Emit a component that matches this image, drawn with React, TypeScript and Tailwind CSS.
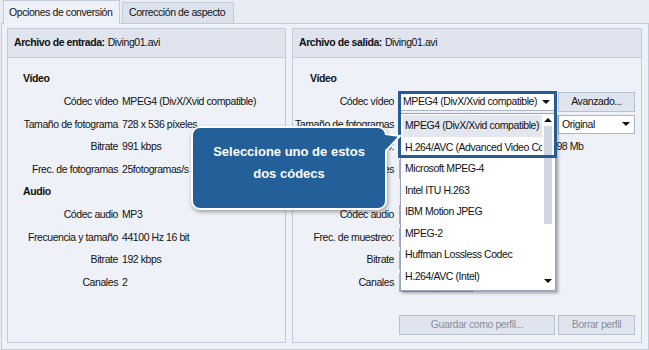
import React from "react";

const leftRows: [string, string, boolean?][] = [
  ["Vídeo", "", true],
  ["Códec vídeo", "MPEG4 (DivX/Xvid compatible)"],
  ["Tamaño de fotograma", "728 x 536 píxeles"],
  ["Bitrate", "991 kbps"],
  ["Frec. de fotogramas", "25fotogramas/s"],
  ["Audio", "", true],
  ["Códec audio", "MP3"],
  ["Frecuencia y tamaño", "44100 Hz 16 bit"],
  ["Bitrate", "192 kbps"],
  ["Canales", "2"],
];

const codecs = [
  "MPEG4 (DivX/Xvid compatible)",
  "H.264/AVC (Advanced Video Codec)",
  "Microsoft MPEG-4",
  "Intel ITU H.263",
  "IBM Motion JPEG",
  "MPEG-2",
  "Huffman Lossless Codec",
  "H.264/AVC (Intel)",
];

function Arrow() {
  return (
    <svg width="8" height="4" viewBox="0 0 8 4" className="shrink-0">
      <path d="M0 0h8L4 4z" fill="#111" />
    </svg>
  );
}

function Select({ w, text, className = "" }: { w: string; text: string; className?: string }) {
  return (
    <div
      className={`${w} shrink-0 h-[19px] bg-white border border-[#a9b4c8] flex items-center justify-between pl-[3px] pr-[4px] ${className}`}
    >
      <span className="truncate">{text}</span>
      <Arrow />
    </div>
  );
}

function Button({ w, text }: { w: string; text: string }) {
  return (
    <div
      className={`${w} h-[20px] bg-[#dfe4ef] border border-[#b7c0d1] flex items-center justify-center text-[#8a909c]`}
    >
      {text}
    </div>
  );
}

function PanelHeader({ label, file }: { label: string; file: string }) {
  return (
    <div className="h-[29px] bg-[#dfe4ef] border-b border-[#c8cfdc] flex items-center px-[6px] whitespace-nowrap">
      <span className="font-bold">{label}</span>
      <span className="ml-[3px]">{file}</span>
    </div>
  );
}

function Label({ children }: { children: React.ReactNode }) {
  return <div className="w-[101px] shrink-0 text-right whitespace-nowrap flex justify-end">{children}</div>;
}

export default function App() {
  return (
    <div className="relative w-[649px] h-[350px] bg-[#e9ecf3] text-[10.5px] tracking-[-0.42px] text-[#111] font-['Liberation_Sans',sans-serif] overflow-hidden">
      {/* tabs */}
      <div className="h-[23px] flex items-end pl-[3px] whitespace-nowrap">
        <div className="w-[117px] h-[24px] -mb-px z-10 bg-[#eef1f7] border border-b-0 border-[#c3cbdb] flex items-center pl-[5px]">
          Opciones de conversión
        </div>
        <div className="ml-[2px] w-[112px] h-[21px] bg-[#dce2ed] border border-b-0 border-[#c3cbdb] flex items-center pl-[6px]">
          Corrección de aspecto
        </div>
      </div>

      {/* tab content */}
      <div className="ml-[1px] w-[648px] h-[327px] bg-[#eef1f7] border border-[#c3cbdb] pt-[4px] pl-[5px] pr-[6px] pb-[6px] flex gap-[6px]">
        {/* input */}
        <div className="w-[279px] h-[315px] border border-[#c3cbdb] bg-[#eef1f7]">
          <PanelHeader label="Archivo de entrada:" file="Diving01.avi" />
          <div className="pt-[10px]">
            {leftRows.map(([k, v, head], i) =>
              head ? (
                <div key={i} className="h-[22.6px] flex items-center pl-[15px] font-bold">
                  {k}
                </div>
              ) : (
                <div key={i} className="h-[22.6px] flex items-center">
                  <div className="w-[110px] text-right whitespace-nowrap">{k}</div>
                  <div className="ml-[4px] whitespace-nowrap">{v}</div>
                </div>
              )
            )}
          </div>
        </div>

        {/* output */}
        <div className="w-[350px] h-[315px] border border-[#c3cbdb] bg-[#eef1f7] flex flex-col">
          <PanelHeader label="Archivo de salida:" file="Diving01.avi" />
          <div className="pt-[10px]">
            <div className="h-[22.6px] flex items-center pl-[17px] font-bold">Vídeo</div>
            <div className="h-[22.6px] flex items-center">
              <Label>Códec vídeo</Label>
              <Select w="w-[156px]" text="MPEG4 (DivX/Xvid compatible)" className="ml-[5px]" />
              <div className="ml-[3px] w-[77px] h-[20px] bg-[#dfe4ef] border border-[#b7c0d1] flex items-center justify-center">
                Avanzado...
              </div>
            </div>
            <div className="h-[22.6px] flex items-center">
              <Label>Tamaño de fotogramas</Label>
              <Select w="w-[156px]" text="728 x 536" className="ml-[5px]" />
              <Select w="w-[77px]" text="Original" className="ml-[3px]" />
            </div>
            <div className="h-[22.6px] flex items-center">
              <Label>Tamaño:</Label>
              <Select w="w-[140px]" text="Calidad" className="ml-[5px]" />
              <div className="ml-[12px] whitespace-nowrap">198 Mb</div>
            </div>
            <div className="h-[22.6px] flex items-center">
              <Label>Imágenes</Label>
              <Select w="w-[74px]" text="25" className="ml-[5px]" />
            </div>
            <div className="h-[22.6px] flex items-center pl-[17px] font-bold">Audio</div>
            <div className="h-[22.6px] flex items-center">
              <Label>Códec audio</Label>
              <Select w="w-[156px]" text="MP3" className="ml-[5px]" />
            </div>
            <div className="h-[22.6px] flex items-center">
              <Label>Frec. de muestreo:</Label>
              <Select w="w-[74px]" text="44100" className="ml-[5px]" />
            </div>
            <div className="h-[22.6px] flex items-center">
              <Label>Bitrate</Label>
              <Select w="w-[74px]" text="192" className="ml-[5px]" />
            </div>
            <div className="h-[22.6px] flex items-center">
              <Label>Canales</Label>
              <Select w="w-[74px]" text="2" className="ml-[5px]" />
            </div>
          </div>
          <div className="mt-auto mb-[7px] flex pl-[106px] gap-[3px]">
            <Button w="w-[156px]" text="Guardar como perfil..." />
            <Button w="w-[77px]" text="Borrar perfil" />
          </div>
        </div>
      </div>

      {/* open codec list */}
      <div className="absolute left-[400px] top-[113px] w-[156px] h-[178px] bg-white border border-[#9aa6bb] shadow-[2px_2px_3px_rgba(0,0,0,0.35)] flex">
        <div className="flex-1 min-w-0 pt-px pl-[2px]">
          {codecs.map((c, i) => (
            <div
              key={c}
              className={`h-[21.6px] flex items-center pl-[2px] whitespace-nowrap overflow-hidden ${
                i === 0 ? "bg-[#e3e7f0]" : ""
              }`}
            >
              {c}
            </div>
          ))}
        </div>
        <div className="w-[11px] shrink-0 mr-[2px] flex flex-col items-center">
          <svg width="8" height="4" viewBox="0 0 8 4" className="mt-[4px]">
            <path d="M4 0l4 4H0z" fill="#111" />
          </svg>
          <div className="mt-[4px] w-[8px] h-[98px] bg-[#cfd5e2]" />
          <div className="flex-1" />
          <div className="mb-[7px]">
            <Arrow />
          </div>
        </div>
      </div>

      {/* highlight frame */}
      <div className="absolute left-[398px] top-[91px] w-[159px] h-[67px] border-[3px] border-[#245c93] pointer-events-none" />

      {/* callout */}
      <div className="absolute left-[191px] top-[126px] w-[196px] h-[84px] rounded-[9px] border-2 border-white bg-[#23609a] shadow-[1px_2px_4px_rgba(0,0,0,0.35)] flex flex-col items-center justify-center pb-[10px] text-white font-bold text-[13px] tracking-normal leading-[22px]">
        <span>Seleccione uno de estos</span>
        <span>dos códecs</span>
      </div>
      <svg className="absolute left-[382px] top-[131px]" width="20" height="24" viewBox="0 0 20 24">
        <path d="M0 3 L18 5 L0 22 Z" fill="#23609a" />
        <path d="M3 3 L18 5 L4 20" fill="none" stroke="#fff" strokeWidth="2" />
      </svg>
    </div>
  );
}
